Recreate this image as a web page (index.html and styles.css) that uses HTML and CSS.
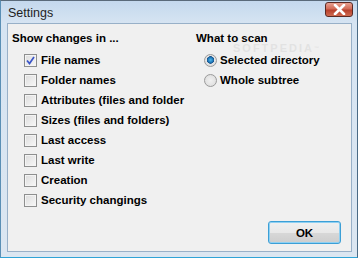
FILE: index.html
```html
<!DOCTYPE html>
<html lang="en">
<head>
    <meta charset="UTF-8">
    <title>Settings</title>
    <link rel="stylesheet" href="styles.css">
</head>
<body>
    <div class="window">
        <div class="titlebar">
            <span class="title">Settings</span>
            <button class="close-btn">
                <svg width="13" height="11" viewBox="0 0 13 11"><path d="M2 1 L11 10 M11 1 L2 10" stroke="#fff" stroke-width="2.6" stroke-linecap="round"/></svg>
            </button>
        </div>
        <div class="client">
            <div class="columns">
                <div class="group changes">
                    <h2>Show changes in ...</h2>
                    <label class="opt"><span class="check checked"><svg width="9" height="9" viewBox="0 0 9 9"><path d="M1 4.5 L3.5 7.5 L8 1" fill="none" stroke="#3a55c8" stroke-width="1.7"/></svg></span>File names</label>
                    <label class="opt"><span class="check"></span>Folder names</label>
                    <label class="opt"><span class="check"></span>Attributes (files and folder</label>
                    <label class="opt"><span class="check"></span>Sizes (files and folders)</label>
                    <label class="opt"><span class="check"></span>Last access</label>
                    <label class="opt"><span class="check"></span>Last write</label>
                    <label class="opt"><span class="check"></span>Creation</label>
                    <label class="opt"><span class="check"></span>Security changings</label>
                </div>
                <div class="group scan">
                    <h2>What to scan</h2>
                    <label class="opt"><span class="radio on"></span>Selected directory</label>
                    <label class="opt"><span class="radio"></span>Whole subtree</label>
                </div>
            </div>
            <div class="footer">
                <button class="ok-btn">OK</button>
            </div>
            <div class="watermark">SOFTPEDIA<sup>™</sup></div>
        </div>
    </div>
</body>
</html>
```

FILE: styles.css
```css
* { margin: 0; padding: 0; box-sizing: border-box; }

body {
    width: 358px;
    height: 258px;
    overflow: hidden;
    font-family: "Liberation Sans", Arial, sans-serif;
    background: #fff;
}

.window {
    width: 358px;
    height: 258px;
    border: 1px solid #5a6a7a;
    border-bottom-color: #2fa3d6;
    border-left-color: #5a8fb5;
    border-right-color: #4a6a85;
    background: linear-gradient(to bottom, #c4d8ed 0px, #d6e4f2 22px, #dbe6f1 100%);
    display: flex;
    flex-direction: column;
    padding: 0 5px 5px 6px;
}

.titlebar {
    height: 22px;
    display: flex;
    align-items: center;
    justify-content: space-between;
    flex-shrink: 0;
}
.title { font-size: 12.5px; color: #1e1e1e; padding-left: 1px; margin-top: 1px; }

.close-btn {
    width: 28px; height: 15px;
    margin-top: -5px;
    margin-right: -1px;
    border: 1px solid #5a2a24;
    border-radius: 3px;
    background: linear-gradient(to bottom, #e8a090 0%, #d26a56 45%, #b8402c 55%, #cf6a50 100%);
    display: flex; align-items: center; justify-content: center;
}

.client {
    position: relative;
    flex: 1;
    background: #f0f0f0;
    border: 1px solid #98b0c8;
    display: flex;
    flex-direction: column;
    padding: 7px 0 0 4px;
    font-size: 11.5px;
    font-weight: bold;
    color: #000;
}

.columns { display: flex; }
.group { display: flex; flex-direction: column; }
.changes { width: 184px; flex-shrink: 0; }
.scan { flex: 1; }

h2 { font-size: 11.5px; font-weight: bold; height: 19px; line-height: 14px; }

.opt {
    display: flex;
    align-items: center;
    height: 20px;
    padding-left: 12px;
    white-space: nowrap;
}

.check {
    width: 13px; height: 13px;
    border: 1px solid #8e8f8f;
    background: linear-gradient(135deg, #dcdcdc, #f8f8f8);
    box-shadow: inset 0 0 0 1px #f4f4f4;
    margin-right: 4px;
    display: flex; align-items: center; justify-content: center;
    flex-shrink: 0;
}

.scan .opt { padding-left: 8px; }
.radio {
    width: 13px; height: 13px;
    border-radius: 50%;
    border: 1px solid #9a9a9a;
    background: radial-gradient(circle at 50% 50%, #f0f0f0 0, #dadada 100%);
    margin-right: 3px;
    flex-shrink: 0;
}
.radio.on {
    background: radial-gradient(circle at 50% 45%, #4fb8ee 0, #1f78b8 2.5px, #1b4f86 3.5px, #e6e6e6 4px, #d4d4d4 100%);
}

.footer {
    margin-top: auto;
    display: flex;
    justify-content: flex-end;
    padding: 0 10px 7px 0;
}
.ok-btn {
    width: 73px; height: 23px;
    border: 1px solid #3c9fd6;
    border-radius: 3px;
    box-shadow: inset 0 0 0 1px #8fd0f2;
    background: linear-gradient(to bottom, #f0f0f0 0%, #e8e8e8 50%, #d8d8d8 51%, #cdcdcd 100%);
    font-family: "Liberation Sans", Arial, sans-serif;
    font-size: 11.5px;
    font-weight: bold;
    color: #000;
}

.watermark {
    position: absolute;
    left: 225px; top: 20px;
    font-size: 11px;
    line-height: 9px;
    font-weight: bold;
    letter-spacing: 2px;
    color: rgba(205, 205, 205, 0.4);
    pointer-events: none;
}
.watermark sup { font-size: 5px; vertical-align: top; }
```
